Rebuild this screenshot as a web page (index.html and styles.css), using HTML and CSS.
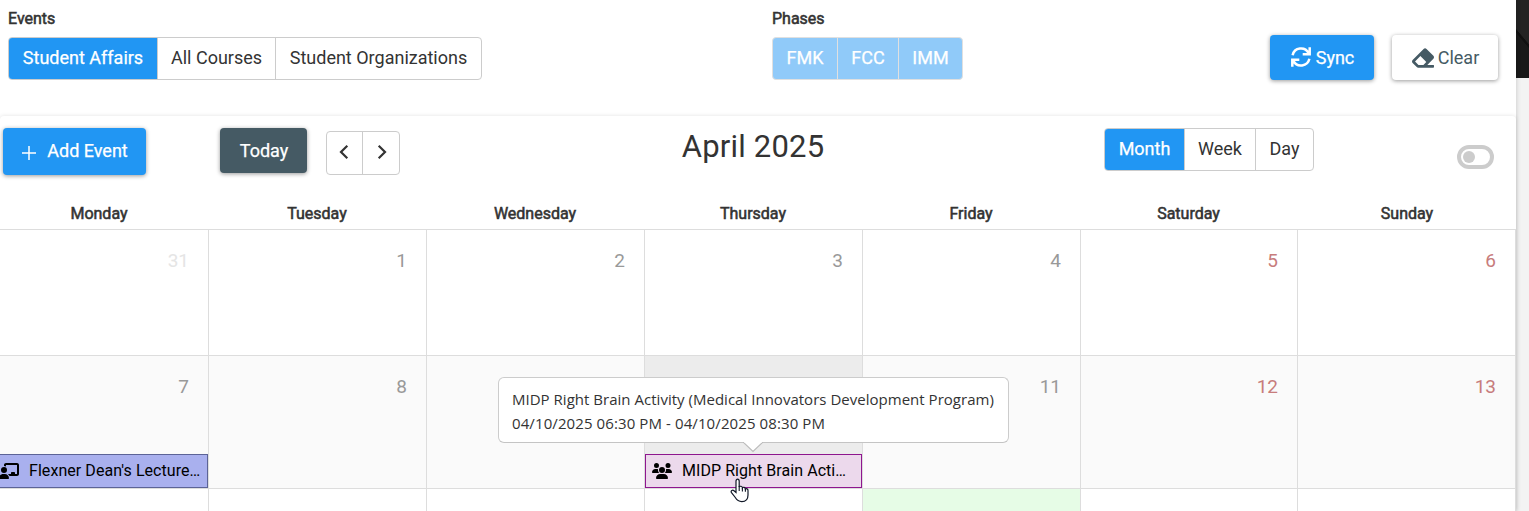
FILE: index.html
```html
<!DOCTYPE html>
<html lang="en">
<head>
<meta charset="utf-8">
<title>Calendar</title>
<link rel="stylesheet" href="styles.css">
</head>
<body>
<div class="page">
  <main class="content">
    <section class="filters">
      <div class="filter events">
        <div class="label">Events</div>
        <div class="group"><button class="active w-affairs">Student Affairs</button><button class="w-courses">All Courses</button><button class="w-orgs">Student Organizations</button></div>
      </div>
      <div class="filter phases">
        <div class="label">Phases</div>
        <div class="group disabled"><button class="w-fmk">FMK</button><button class="w-fcc">FCC</button><button class="w-imm">IMM</button></div>
      </div>
      <div class="actions">
        <button class="raised blue sync"><svg width="22" height="22" viewBox="0 0 22 22" fill="none" stroke="#fff" stroke-width="2.5"><path d="M2.6 9.2A8.6 8.6 0 0 1 18.6 7.1M19.7 1.2V8.2H12.7M19.4 12.8A8.6 8.6 0 0 1 3.4 14.9M2.3 20.8V13.8H9.3"/></svg><span>Sync</span></button>
        <button class="raised white clear"><svg width="22" height="22" viewBox="0 0 512 512" fill="#455a64"><path d="M497.941 273.941c18.745-18.745 18.745-49.137 0-67.882l-160-160c-18.745-18.745-49.136-18.746-67.883 0l-256 256c-18.745 18.745-18.745 49.137 0 67.882l96 96A48.004 48.004 0 0 0 144 480h356c6.627 0 12-5.373 12-12v-40c0-6.627-5.373-12-12-12H355.883l142.058-142.059zm-302.627-62.627l137.373 137.373L265.373 416H150.628l-80-80 124.686-124.686z"/></svg><span>Clear</span></button>
      </div>
    </section>
    <section class="calendar">
      <header class="toolbar">
        <button class="raised blue add"><svg width="14" height="14" viewBox="0 0 14 14" stroke="#fff" stroke-width="1.5"><path d="M7 0V14M0 7H14"/></svg><span>Add Event</span></button>
        <button class="raised slate today">Today</button>
        <div class="group nav">
          <button aria-label="Previous"><svg width="10" height="14" viewBox="0 0 10 14" fill="none" stroke="#333" stroke-width="2.2"><path d="M8.3 .8L2 7L8.3 13.2"/></svg></button><button aria-label="Next"><svg width="10" height="14" viewBox="0 0 10 14" fill="none" stroke="#333" stroke-width="2.2"><path d="M1.7 .8L8 7L1.7 13.2"/></svg></button>
        </div>
        <h1>April 2025</h1>
        <div class="group views"><button class="active w-month">Month</button><button class="w-week">Week</button><button class="w-day">Day</button></div>
        <div class="toggle"><i></i></div>
      </header>
      <div class="grid heads"><div>Monday</div><div>Tuesday</div><div>Wednesday</div><div>Thursday</div><div>Friday</div><div>Saturday</div><div>Sunday</div></div>
      <div class="grid week first">
        <div class="day other"><b>31</b></div><div class="day"><b>1</b></div><div class="day"><b>2</b></div><div class="day"><b>3</b></div><div class="day"><b>4</b></div><div class="day weekend"><b>5</b></div><div class="day weekend"><b>6</b></div>
      </div>
      <div class="grid week second">
        <div class="day"><b>7</b>
          <div class="event lecture"><svg width="20" height="16" viewBox="0 0 640 512"><path d="M160 64c0-35.3 28.7-64 64-64H576c35.3 0 64 28.7 64 64V352c0 35.3-28.7 64-64 64H336.8c-11.8-25.5-29.9-47.5-52.4-64H384V320c0-17.7 14.3-32 32-32h64c17.7 0 32 14.3 32 32v32h64V64L224 64v49.1C205.2 102.2 183.3 96 160 96V64zm0 64a96 96 0 1 1 0 192 96 96 0 1 1 0-192zM133.3 352h53.3C260.3 352 320 411.7 320 485.3c0 14.7-11.9 26.7-26.7 26.7H26.7C11.9 512 0 500.1 0 485.3C0 411.7 59.7 352 133.3 352z"/></svg><span>Flexner Dean's Lecture…</span></div>
        </div>
        <div class="day"><b>8</b></div><div class="day"></div>
        <div class="day hover"><b></b>
          <div class="event midp"><svg width="20" height="16" viewBox="0 0 640 512"><path d="M144 0a80 80 0 1 1 0 160A80 80 0 1 1 144 0zM512 0a80 80 0 1 1 0 160A80 80 0 1 1 512 0zM0 298.7C0 239.8 47.8 192 106.7 192h42.7c15.9 0 31 3.5 44.6 9.7c-1.3 7.2-1.9 14.7-1.9 22.3c0 38.2 16.8 72.5 43.3 96c-.2 0-.4 0-.7 0H21.3C9.6 320 0 310.4 0 298.7zM405.3 320c-.2 0-.4 0-.7 0c26.6-23.5 43.3-57.8 43.3-96c0-7.6-.7-15-1.9-22.3c13.6-6.3 28.7-9.7 44.6-9.7h42.7C592.2 192 640 239.8 640 298.7c0 11.8-9.6 21.3-21.3 21.3H405.3zM224 224a96 96 0 1 1 192 0 96 96 0 1 1 -192 0zM128 485.3C128 411.7 187.7 352 261.3 352H378.7C452.3 352 512 411.7 512 485.3c0 14.7-11.9 26.7-26.7 26.7H154.7c-14.7 0-26.7-11.9-26.7-26.7z"/></svg><span>MIDP Right Brain Acti…</span></div>
        </div>
        <div class="day"><b>11</b></div><div class="day weekend"><b>12</b></div><div class="day weekend"><b>13</b></div>
      </div>
      <div class="grid week third"><div class="day"></div><div class="day"></div><div class="day"></div><div class="day"></div><div class="day green"></div><div class="day"></div><div class="day"></div></div>
    </section>
  </main>
  <aside class="backdrop"><div class="photo"></div></aside>
  <div class="tooltip"><div class="line1">MIDP Right Brain Activity (Medical Innovators Development Program)</div><div class="line2">04/10/2025 06:30 PM - 04/10/2025 08:30 PM</div>
    <svg class="arrow" width="20" height="11" viewBox="0 0 20 11"><path d="M0 0L10 9.5L20 0" fill="#fff" stroke="#bbb" stroke-width="1.2"/><path d="M1 0H19" stroke="#fff" stroke-width="1"/></svg>
  </div>
  <svg class="cursor" width="20" height="25" viewBox="0 0 20 25"><path d="M6 14.5V3.2C6 .4 9.2 .4 9.2 3.2V9C9.8 7.8 12.3 8 12.4 9.8C13.2 8.8 15.3 9.2 15.4 11C16.4 10.2 18 10.9 18 12.5V17C18 21 15.6 23.6 11.8 23.6C8.5 23.6 6.9 22.2 5.3 19.5L1.5 14.6C.3 12.6 2.6 11.4 4 12.7Z" fill="#fff" stroke="#111827" stroke-width="1.2"/><path d="M9.2 8V13M12.4 9.8V13.4M15.4 11V13.8" stroke="#111827" stroke-width="1.1"/></svg>
</div>
</body>
</html>
```
FILE: styles.css
```css
* { box-sizing: border-box; }
body { margin: 0; background: #f3f3f3; color: #333; font-family: Roboto, sans-serif; font-size: 18px; }
button { font: inherit; color: inherit; border: 0; background: none; padding: 0; margin: 0; display: flex; align-items: center; justify-content: center; white-space: nowrap; }
svg { display: block; flex: none; }
.page { position: relative; width: 1529px; height: 511px; display: flex; overflow: hidden; }
.content { width: 1516px; flex: none; background: #fff; box-shadow: 0 0 5px rgba(0,0,0,.2); z-index: 1; overflow: clip; overflow-clip-margin: 8px; }
.backdrop { flex: 1; }
.photo { height: 78px; background: linear-gradient(50deg, #191919 0 48%, #101010 49% 52%, #232323 53% 100%); }
.filters { display: flex; height: 116px; padding-left: 8px; }
.label { height: 37px; padding-top: 9px; font-size: 16px; line-height: 19px; -webkit-text-stroke: .55px #333; }
.events { width: 764px; }
.phases { width: 498px; }
.group { display: flex; width: max-content; height: 43px; border: 1px solid #ccc; border-radius: 4px; overflow: hidden; background: #fff; }
.group button { border-right: 1px solid #ccc; padding-bottom: 2px; }
.group button:last-child { border-right: 0; }
.group .active { background: #2196f3; color: #fff; -webkit-text-stroke: .25px #fff; }
.w-affairs { width: 149px; }
.w-courses { width: 118px; }
.w-orgs { width: 205px; }
.disabled { border-color: #e0e0e0; background: #90caf9; color: #fff; -webkit-text-stroke: .25px #fff; }
.disabled button { border-color: #e0e0e0; }
.w-fmk { width: 65px; }
.w-fcc { width: 61px; }
.w-imm { width: 63px; }
.actions { display: flex; gap: 18px; padding-top: 35px; }
.raised { height: 45px; border-radius: 4px; box-shadow: 0 1px 4px rgba(0,0,0,.4); }
.blue { background: #2196f3; color: #fff; -webkit-text-stroke: .25px #fff; }
.slate { background: #455a64; color: #fff; -webkit-text-stroke: .25px #fff; }
.white { background: #fff; color: #455a64; }
.sync { width: 104px; gap: 4px; }
.sync svg { margin-top: -2px; }
.clear { width: 106px; gap: 4px; padding-left: 1px; }
.calendar { background: #fff; border-radius: 4px; box-shadow: 0 0 4px rgba(0,0,0,.12); }
.toolbar { display: flex; height: 82px; padding: 12px 0 0 3px; }
.add { width: 143px; height: 47px; gap: 11px; padding: 0 0 2px 1px; }
.add svg { margin-top: 4px; }
.today { width: 87px; margin-left: 74px; padding-left: 1px; }
.nav { margin: 3px 0 0 19px; height: 44px; }
.nav button { width: 36px; }
.nav button:first-child { padding-right: 1px; }
.nav button:last-child { padding-left: 1px; }
h1 { width: 706px; margin: 2px 0 0; font-size: 31px; line-height: 34px; font-weight: 400; letter-spacing: .2px; text-align: center; }
.views { margin-left: -2px; }
.w-month { width: 80px; }
.w-week { width: 71px; }
.w-day { width: 57px; }
.toggle { width: 37px; height: 24px; margin: 17px 0 0 143px; padding: 3px; border: 4px solid #ccc; border-radius: 12px; }
.toggle i { display: block; width: 12px; height: 12px; margin: -1px 0 0 -1px; border-radius: 50%; background: #ccc; }
.grid { display: grid; grid-template-columns: repeat(5, 218px) 217px 218px; margin-left: -9px; width: 1525px; }
.heads { height: 32px; border-bottom: 1px solid #ddd; font-size: 16px; line-height: 19px; padding-top: 6px; text-align: center; -webkit-text-stroke: .55px #333; }
.heads div { padding-right: 2px; }
.heads div:last-child { padding-right: 0; }
.day { position: relative; display: flex; flex-direction: column; justify-content: space-between; border-right: 1px solid #ddd; border-bottom: 1px solid #ddd; }
.day b { font-weight: 400; font-size: 19px; line-height: 24px; text-align: right; padding: 19px 19px 0 0; color: #999; }
.day.other b { color: #e5e5e5; }
.day.weekend b { color: #c77c7c; }
.first { height: 126px; }
.second { height: 133px; }
.second .day { background: #fafafa; }
.second .hover { background: #ececec; }
.third { height: 24px; }
.third .green { background: #e6fce6; }
.event { height: 34px; display: flex; align-items: center; border: 1px solid; font-size: 16px; letter-spacing: .06px; color: #000; white-space: nowrap; padding-bottom: 1px; }
.lecture { background: #a9b0ee; border-color: #5c6396; padding-left: 7px; }
.lecture span { margin-left: 10px; }
.midp { background: #ecd9ec; border-color: #8e168e; padding-left: 6px; }
.midp span { margin-left: 10px; }
.tooltip { position: absolute; z-index: 3; left: 498px; top: 377px; width: 511px; height: 66px; border: 1px solid #ccc; border-bottom-color: #c4c4c4; border-radius: 6px; background: #fff; color: #333; font-family: "Open Sans", sans-serif; font-size: 15px; line-height: 24px; padding: 9px 13px; white-space: nowrap; }
.line1 { letter-spacing: .02px; }
.line2 { letter-spacing: .1px; }
.arrow { position: absolute; left: 244px; top: 64px; }
.cursor { position: absolute; z-index: 4; left: 730px; top: 478px; }
```
